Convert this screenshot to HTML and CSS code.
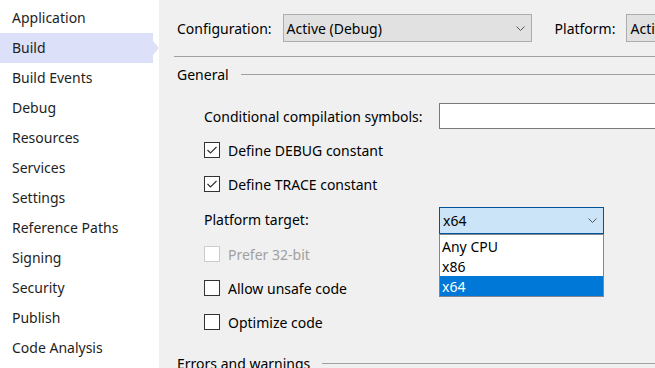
FILE: index.html
```html
<!DOCTYPE html>
<html lang="en">
<head>
    <meta charset="UTF-8">
    <title>Build - Project Properties</title>
    <link rel="stylesheet" href="styles.css">
</head>
<body>
    <div class="page">
        <nav class="sidebar">
            <div class="nav-item">Application</div>
            <div class="nav-item active">Build</div>
            <div class="nav-item">Build Events</div>
            <div class="nav-item">Debug</div>
            <div class="nav-item">Resources</div>
            <div class="nav-item">Services</div>
            <div class="nav-item">Settings</div>
            <div class="nav-item">Reference Paths</div>
            <div class="nav-item">Signing</div>
            <div class="nav-item">Security</div>
            <div class="nav-item">Publish</div>
            <div class="nav-item">Code Analysis</div>
        </nav>
        <main class="main">
            <div class="toolbar">
                <span class="tool-label">Configuration:</span>
                <div class="combo config-combo">
                    <span>Active (Debug)</span>
                    <svg class="chevron" width="9" height="5" viewBox="0 0 9 5"><path d="M0.5 0.5 L4.5 4.5 L8.5 0.5" fill="none" stroke="#555" stroke-width="1"/></svg>
                </div>
                <span class="tool-label platform-label">Platform:</span>
                <div class="combo platform-combo">
                    <span>Active (x64)</span>
                </div>
            </div>
            <div class="toolbar-line"></div>

            <div class="section-head">
                <span>General</span>
                <div class="section-line"></div>
            </div>

            <div class="section-body">
                <div class="row">
                    <span class="field-label">Conditional compilation symbols:</span>
                    <div class="textbox"></div>
                </div>
                <div class="row">
                    <span class="check checked"><svg width="14" height="14" viewBox="0 0 14 14"><path d="M2.5 7 L5.5 10 L11.5 4" fill="none" stroke="#333" stroke-width="1.2"/></svg></span>
                    <span>Define DEBUG constant</span>
                </div>
                <div class="row">
                    <span class="check checked"><svg width="14" height="14" viewBox="0 0 14 14"><path d="M2.5 7 L5.5 10 L11.5 4" fill="none" stroke="#333" stroke-width="1.2"/></svg></span>
                    <span>Define TRACE constant</span>
                </div>
                <div class="row row-tall">
                    <span class="field-label">Platform target:</span>
                    <div class="dropdown">
                        <div class="combo target-combo">
                            <span>x64</span>
                            <svg class="chevron" width="9" height="5" viewBox="0 0 9 5"><path d="M0.5 0.5 L4.5 4.5 L8.5 0.5" fill="none" stroke="#555" stroke-width="1"/></svg>
                        </div>
                        <div class="dropdown-list">
                            <div class="option">Any CPU</div>
                            <div class="option">x86</div>
                            <div class="option selected">x64</div>
                        </div>
                    </div>
                </div>
                <div class="row disabled">
                    <span class="check"></span>
                    <span>Prefer 32-bit</span>
                </div>
                <div class="row">
                    <span class="check"></span>
                    <span>Allow unsafe code</span>
                </div>
                <div class="row">
                    <span class="check"></span>
                    <span>Optimize code</span>
                </div>
            </div>

            <div class="section-head errors-head">
                <span>Errors and warnings</span>
                <div class="section-line"></div>
            </div>
        </main>
    </div>
</body>
</html>
```

FILE: styles.css
```css
body {
    margin: 0;
    font-family: 'Noto Sans', 'Open Sans', sans-serif;
    font-size: 14px;
    color: #000;
    background-color: #f0f0f0;
    overflow: hidden;
}
.page {
    display: flex;
    height: 368px;
}
.sidebar {
    width: 159px;
    flex-shrink: 0;
    background-color: #fff;
    padding-top: 3px;
}
.nav-item {
    position: relative;
    height: 30px;
    line-height: 30px;
    padding-left: 12px;
    width: 141px;
    color: #1e1e1e;
}
.nav-item.active {
    background-color: #dce0f8;
}
.nav-item.active::after {
    content: '';
    position: absolute;
    right: -6px;
    top: 8px;
    border-top: 7px solid transparent;
    border-bottom: 7px solid transparent;
    border-left: 6px solid #dce0f8;
}
.main {
    flex: 1;
    overflow: hidden;
    padding-left: 15px;
}
.toolbar {
    display: flex;
    align-items: center;
    height: 28px;
    padding: 14px 0 0 3px;
    white-space: nowrap;
}
.tool-label {
    margin-right: 11px;
}
.platform-label {
    margin-left: 23px;
}
.combo {
    display: flex;
    align-items: center;
    justify-content: space-between;
    box-sizing: border-box;
    height: 28px;
    padding: 0 6px 0 3px;
    background-color: #e1e1e1;
    border: 1px solid #adadad;
    flex-shrink: 0;
}
.config-combo {
    width: 249px;
}
.platform-combo {
    width: 200px;
}
.toolbar-line {
    height: 1px;
    background-color: #a0a0a0;
    margin-top: 14px;
}
.section-head {
    display: flex;
    align-items: center;
    height: 34px;
    padding-left: 3px;
    white-space: nowrap;
}
.section-line {
    flex: 1;
    height: 1px;
    background-color: #a0a0a0;
    margin-left: 12px;
}
.section-body {
    padding: 8px 0 7px 30px;
}
.row {
    display: flex;
    align-items: center;
    height: 34px;
    white-space: nowrap;
}
.row-tall {
    height: 36px;
}
.field-label {
    width: 235px;
    flex-shrink: 0;
}
.textbox {
    width: 300px;
    height: 26px;
    box-sizing: border-box;
    flex-shrink: 0;
    background-color: #fff;
    border: 1px solid #7a7a7a;
}
.check {
    display: flex;
    align-items: center;
    justify-content: center;
    width: 16px;
    height: 16px;
    box-sizing: border-box;
    border: 1px solid #333;
    background-color: #fff;
    margin-right: 8px;
    flex-shrink: 0;
}
.disabled {
    color: #a0a0a0;
}
.disabled .check {
    border-color: #ccc;
}
.dropdown {
    position: relative;
    margin-top: 3px;
}
.target-combo {
    width: 165px;
    height: 27px;
    background-color: #cce4f7;
    border-color: #005499;
}
.dropdown-list {
    position: absolute;
    top: 27px;
    left: 0;
    width: 165px;
    box-sizing: border-box;
    padding-top: 1px;
    background-color: #fff;
    border: 1px solid #828790;
    z-index: 2;
}
.option {
    height: 20px;
    line-height: 22px;
    padding-left: 2px;
}
.option.selected {
    background-color: #0078d7;
    color: #fff;
}
```
